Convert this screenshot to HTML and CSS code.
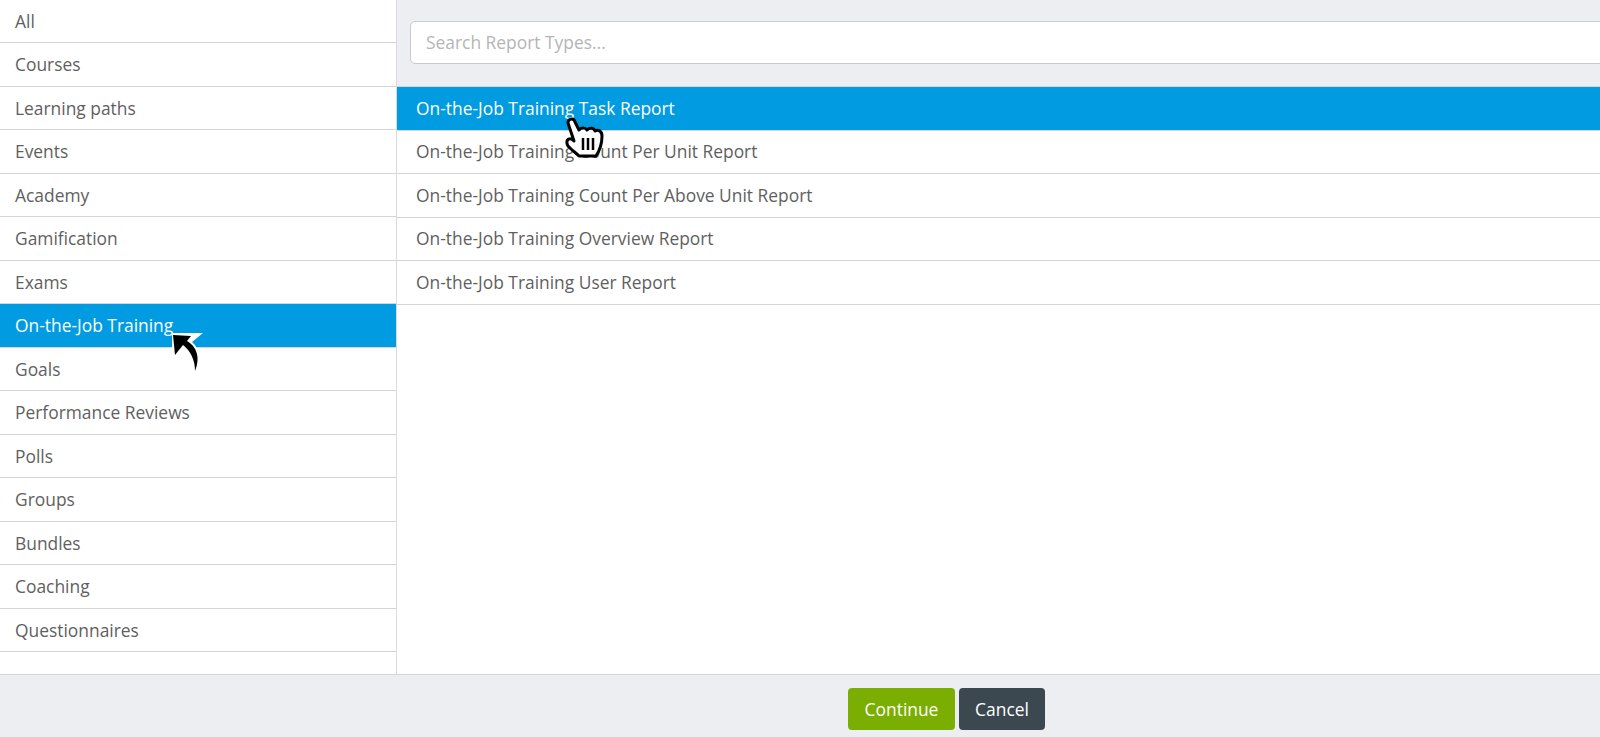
FILE: index.html
```html
<!DOCTYPE html>
<html lang="en">
<head>
<meta charset="utf-8">
<title>Report Types</title>
<link rel="stylesheet" href="styles.css">
</head>
<body>
<div class="page">
  <main class="panes">
    <ul class="side">
      <li class="row">All</li>
      <li class="row">Courses</li>
      <li class="row">Learning paths</li>
      <li class="row">Events</li>
      <li class="row">Academy</li>
      <li class="row">Gamification</li>
      <li class="row">Exams</li>
      <li class="row active">On-the-Job Training</li>
      <li class="row">Goals</li>
      <li class="row">Performance Reviews</li>
      <li class="row">Polls</li>
      <li class="row">Groups</li>
      <li class="row">Bundles</li>
      <li class="row">Coaching</li>
      <li class="row">Questionnaires</li>
    </ul>
    <section class="content">
      <div class="search-bar">
        <input class="search" type="text" placeholder="Search Report Types...">
      </div>
      <ul class="reports">
        <li class="row report active">On-the-Job Training Task Report</li>
        <li class="row report">On-the-Job Training Count Per Unit Report</li>
        <li class="row report">On-the-Job Training Count Per Above Unit Report</li>
        <li class="row report">On-the-Job Training Overview Report</li>
        <li class="row report">On-the-Job Training User Report</li>
      </ul>
    </section>
  </main>
  <footer class="footer">
    <button class="btn btn-go" type="button">Continue</button>
    <button class="btn btn-stop" type="button">Cancel</button>
  </footer>
  <svg class="cursor cursor-arrow" width="32" height="46" viewBox="0 0 32 46">
    <path d="M0 2 L31 2 L20 11 C28 18 30 30 24 42 L21 44 C22 32 18 22 11 17 L3 27 L0 26 Z" fill="#fff"/>
    <path d="M1 4 L19 5 L15 10 C24 15 29 26 23 40 C23 30 19 20 11 14 L3 24 Z" fill="#000"/>
  </svg>
  <svg class="cursor cursor-hand" width="40" height="44" viewBox="0 0 40 44">
    <path d="M3 7 C3 2 9 2 10 6 L14 14 C17 11 21 12 22 14 C25 11 29 12 30 15 C33 13 37 15 37 20 C37 28 35 34 31 40 L14 40 C11 37 8 35 5 32 C1 29 1 24 4 23 C6 22 8 24 9 25 Z" fill="#fff" stroke="#000" stroke-width="3" stroke-linejoin="round"/>
    <path d="M18 22 V34 M23 22 V34 M28 22 V34" stroke="#000" stroke-width="2.500" fill="none"/>
  </svg>
</div>
</body>
</html>
```
FILE: styles.css
```css
* { box-sizing: border-box; }
html, body { margin: 0; height: 100%; overflow: hidden; }
body { font-family: "Open Sans", sans-serif; font-size: 17.4px; color: #5f5f5f; background: #fff; }
.page { position: relative; height: 737px; display: flex; flex-direction: column; }
.panes { flex: 1; min-height: 0; display: flex; }
.side { width: 397px; flex: none; margin: 0; padding: 0; list-style: none; border-right: 1px solid #d9dadd; }
.reports { margin: 0; padding: 0; list-style: none; }
.row { height: 43.47px; line-height: 42px; padding-left: 15px; border-bottom: 1px solid #d4d5d8; white-space: nowrap; }
.report { height: 43.5px; line-height: 41.8px; padding-top: 0.9px; padding-left: 19px; }
.row.active { background: #009be1; color: #fff; }
.content { flex: 1; min-width: 0; overflow: hidden; }
.search-bar { height: 87px; padding: 21px 0 0 13px; background: #eceef2; border-bottom: 1px solid #d4d5d8; }
.search { display: block; width: 1300px; height: 43px; padding: 0 15px 2px; border: 1px solid #c9cad0; border-radius: 5px; background: #fff; font: 17.4px "Open Sans", sans-serif; color: #5f5f5f; outline: none; }
.search::placeholder { color: #b5b5b5; opacity: 1; }
.footer { height: 63px; flex: none; display: flex; justify-content: center; gap: 4px; padding: 13px 0 0 293px; background: #eceef2; border-top: 1px solid #d4d5d8; }
.btn { height: 42px; border: 0; border-radius: 4px; color: #fff; font: 17.4px "Open Sans", sans-serif; padding: 0; }
.btn-go { width: 107px; background: #7aae00; }
.btn-stop { width: 86px; background: #3b4850; }
.cursor { position: absolute; }
.cursor-arrow { left: 172px; top: 331px; }
.cursor-hand { left: 565px; top: 116px; }
```
